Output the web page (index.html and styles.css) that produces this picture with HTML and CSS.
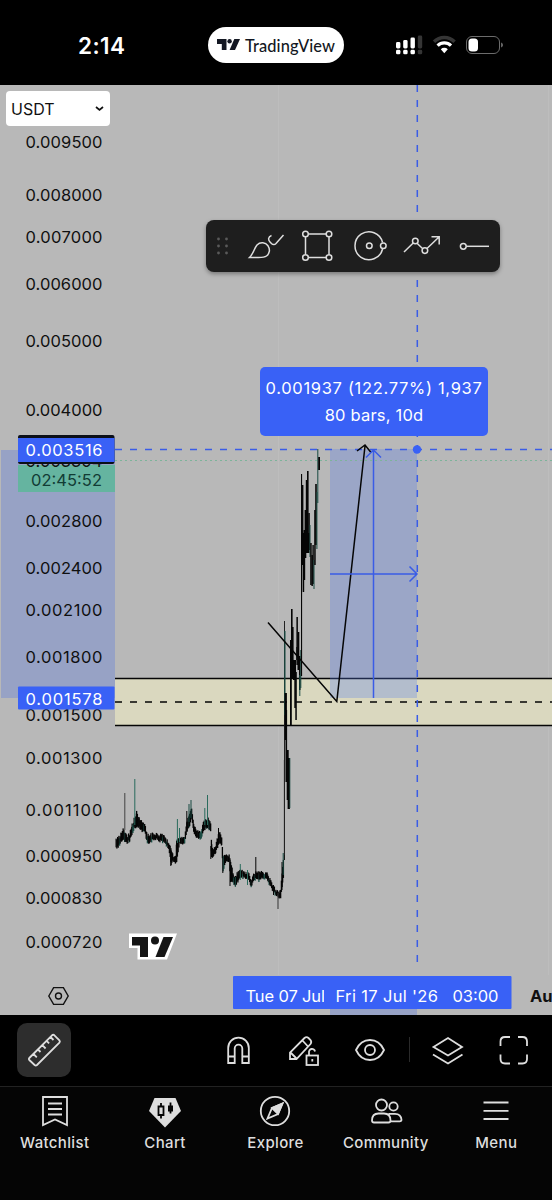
FILE: index.html
```html
<!DOCTYPE html>
<html lang="en">

<head>
    <meta charset="UTF-8" />
    <meta name="viewport" content="width=device-width, initial-scale=1.0" />
    <title>TradingView</title>
    <link rel="stylesheet" href="styles.css">
</head>

<body>
    <header class="status-bar">
        <span class="time">2:14</span>
        <div class="pill">
            <svg width="23" height="12" viewBox="0 0 23 12">
                <path d="M0 0h9.5v11H4.8V5H0z" />
                <circle cx="12.6" cy="2.3" r="2.2" />
                <path d="M17.3 0H23l-5 11h-5.4z" />
            </svg>
            <span>TradingView</span>
        </div>
        <svg class="status-icons" width="110" height="24" viewBox="394 33 110 24">
            <g fill="#fff">
                <rect x="396" y="42" width="4.4" height="6.5" rx="1.4" />
                <rect x="403.2" y="40" width="4.4" height="8.5" rx="1.4" />
                <rect x="410.5" y="37.5" width="4.4" height="11" rx="1.4" />
                <rect x="396" y="49.8" width="4.4" height="4.5" rx="1.4" />
                <rect x="403.2" y="49.8" width="4.4" height="4.5" rx="1.4" />
                <rect x="410.5" y="49.8" width="4.4" height="4.5" rx="1.4" />
            </g>
            <g fill="#353535">
                <rect x="417.8" y="35.5" width="4.4" height="13" rx="1.4" />
                <rect x="417.8" y="49.8" width="4.4" height="4.5" rx="1.4" />
            </g>
            <path d="M434 41.8a14.5 14.5 0 0 1 20.6 0" fill="none" stroke="#353535" stroke-width="3.4" />
            <path d="M437.6 45.6a9.5 9.5 0 0 1 13.4 0" fill="none" stroke="#fff" stroke-width="3.2" />
            <path d="M440.8 49.3a5 5 0 0 1 7 0l-3.5 3.9z" fill="#fff" />
            <rect x="466.5" y="36.5" width="33" height="17" rx="5.5" fill="none" stroke="#6c6c6c" />
            <rect x="468.5" y="38.5" width="9.5" height="13" rx="3.5" fill="#fff" />
            <path d="M501.2 42.5c2.2.8 2.2 4.2 0 5z" fill="#7a7a7a" />
        </svg>
    </header>

    <main class="chart">
        <svg class="plot" width="552" height="930" viewBox="0 85 552 930">
            <path class="grid" d="M278.5 85V975M548.5 85V975" />

            <!-- price zone -->
            <rect x="115" y="678.5" width="437" height="47" fill="#dad8bf" />
            <path class="ink" d="M115 678.5H552M115 725.5H552" />
            <path class="ink" d="M115 702H552" stroke-dasharray="7 8" />

            <!-- price axis -->
            <rect x="1" y="450" width="114" height="248" fill="#97a2c5" />
            <rect x="18" y="465" width="97" height="27" fill="#65b4a0" />
            <g class="axis" id="axis"></g>
            <text class="axis" x="25.5" y="467" textLength="77">0.003304</text>
            <text class="axis countdown" x="31" y="486" textLength="71">02:45:52</text>
            <rect x="18" y="435" width="96.5" height="29" rx="2" fill="#0b0f18" />
            <rect x="18" y="438" width="96.5" height="24" fill="#3961f6" />
            <text class="axis light" x="25.5" y="456" textLength="77">0.003516</text>

            <g id="candles"></g>

            <!-- measured range -->
            <rect x="330" y="449" width="87" height="249" fill="#5b7eea" fill-opacity=".3" />
            <path d="M115 460.5H552" stroke="#7db39a" stroke-dasharray="2 3" />
            <path class="blue" d="M115 449.5H552" stroke-dasharray="7 8" />
            <path class="blue" d="M417.3 85V970" stroke-dasharray="7 8" />
            <path class="ink" d="M268 622.5L336.8 701.5L365 446M357 451L365 445L371 452.5" />
            <path class="blue" d="M373.5 698V450M366 457.5L373.5 450L381 457.5M330 574H417M409.5 566.5L417 574L409.5 581.5" />
            <circle cx="417" cy="449.5" r="4.2" fill="#3961f6" />
            <rect x="18" y="686.5" width="96.5" height="23" rx="1" fill="#3961f6" />
            <text class="axis light" x="25.5" y="704.5" textLength="77">0.001578</text>

            <!-- watermark -->
            <path d="M129 933.5h48l-10 26h-29.5v-11.5h-8.5z" fill="#fff" />
            <g fill="#151515">
                <path d="M132 937h16v20h-8v-11.5h-8z" />
                <circle cx="155" cy="940.5" r="4" />
                <path d="M163.5 937H173l-8.5 20H155.500z" />
            </g>

            <!-- time axis -->
            <rect x="330" y="1005" width="87" height="10" fill="#97a2c5" />
            <rect x="233" y="976" width="278.5" height="33" rx="1" fill="#3961f6" />
            <clipPath id="dateClip"><rect x="240" y="976" width="84" height="33" /></clipPath>
            <g clip-path="url(#dateClip)"><text class="axis light" x="245.5" y="1001.5" textLength="79.5">Tue 07 Jul</text></g>
            <text class="axis light" x="335.5" y="1001.5" textLength="102.5">Fri 17 Jul '26</text>
            <text class="axis light" x="452.5" y="1001.5" textLength="46">03:00</text>
            <text class="axis month" x="530" y="1002">Au</text>
            <path d="M48.8 996l4.8-8.4h9.8l4.8 8.4l-4.8 8.4h-9.8z" fill="none" stroke="#111" stroke-width="1.4" />
            <circle cx="58.5" cy="996" r="3" fill="none" stroke="#111" stroke-width="1.4" />
        </svg>

        <div class="currency">
            <span>USDT</span>
            <svg width="9" height="6" viewBox="0 0 9 6"><path d="M1 1l3.5 3L8 1" fill="none" stroke="#111" stroke-width="1.7" /></svg>
        </div>

        <div class="draw-tools">
            <svg width="294" height="52" viewBox="206 220 294 52">
                <g fill="#5a5a5a">
                    <circle cx="218.5" cy="239" r="1.4" /><circle cx="226.5" cy="239" r="1.4" />
                    <circle cx="218.5" cy="246" r="1.4" /><circle cx="226.5" cy="246" r="1.4" />
                    <circle cx="218.5" cy="253" r="1.4" /><circle cx="226.5" cy="253" r="1.4" />
                </g>
                <path d="M249.5 257.5c4.5-4.5 4.5-9 7.5-12.5c3.5-3.500 8.500-2.500 11 .8c2.500 3.700 1.500 8-1.500 10.200c-2 1.500-4.500 1.500-8 1.500zM271.500 235.500c-3.500 1.200-3.500 4.500-1.500 6.500l1.700 1.700c1.300 1.300 3 1.200 4.300-.2l7.500-8.500" />
                <path d="M308.5 234h17.5M329 237v17.5M326 257.5h-17.5M305.5 254.5V237" />
                <circle cx="305.5" cy="234" r="2.8" /><circle cx="329" cy="234" r="2.8" />
                <circle cx="305.5" cy="257.5" r="2.8" /><circle cx="329" cy="257.5" r="2.8" />
                <path d="M382.6 242.500a14 14 0 1 0 0 6.500" />
                <circle cx="369.3" cy="245.7" r="2.8" /><circle cx="383.3" cy="245.7" r="2.8" />
                <path d="M404 252l9.2-9M417 243.2l5.8 5.5M427 248.5l12-11.5M431.5 236.8h7.7v7.7" />
                <circle cx="415.3" cy="241" r="2.8" /><circle cx="424.9" cy="250.6" r="2.8" />
                <circle cx="463.3" cy="246.3" r="2.9" /><path d="M466.2 246.3H489" />
            </svg>
        </div>

        <div class="range-label">
            <span class="range-price">0.001937 (122.77%) 1,937</span>
            <span>80 bars, 10d</span>
        </div>
    </main>

    <section class="toolbar">
        <button class="tool active" aria-label="Measure">
            <svg width="36" height="36" viewBox="0 0 36 36">
                <path d="M3.3 26L26 3.3q1.2-1 2.4 0l5 5q1 1.2 0 2.4L11 33q-1.2 1-2.4 0l-5.3-5q-1-1 0-2zM7.5 22l3.3 3.3M12 17.5l2.500 2.500M16.300 13.200l3.300 3.300M20.600 8.900l2.500 2.500M24.500 5l3 3" />
            </svg>
        </button>
        <div class="tool-group">
            <svg width="36" height="36" viewBox="0 0 36 36">
                <path d="M8.2 31V16a10.3 10.3 0 0 1 20.6 0v15h-6.5V16.5a3.8 3.8 0 0 0-7.600 0V31zM8.200 24.500h6.500M22.300 24.500h6.500" />
            </svg>
            <svg width="36" height="36" viewBox="0 0 36 36">
                <path d="M4 27v-6.500L18.500 6q2-1.800 4 0l2 2q1.500 2 0 4L10.500 27zM4.500 20.500l6 6M16.500 8.500l5.500 6" />
                <rect x="20.5" y="23.5" width="11.5" height="9.5" />
                <path d="M23 23.500V20.500a3 3 0 0 1 6-1M26.300 27v2.500" />
            </svg>
            <svg width="36" height="36" viewBox="0 0 36 36">
                <path d="M4 18C7 11.5 12 8 18 8s11 3.5 14 10c-3 6.5-8 10-14 10S7 24.5 4 18z" />
                <circle cx="18" cy="18" r="5" />
            </svg>
            <span class="divider"></span>
            <svg width="36" height="36" viewBox="0 0 36 36">
                <path d="M3.5 15L18 6l14 9l-14 8.5zM3 22.500L18 31.500l14.500-9" />
            </svg>
            <svg width="36" height="36" viewBox="0 0 36 36">
                <path d="M4.5 14V9.5q0-4.5 4.5-4.5h5M22 5h4.5q4.5 0 4.5 4.500V14M31 22.500v4.500q0 4.500-4.500 4.500H22M14 31.500H9q-4.500 0-4.500-4.500v-4.500" />
            </svg>
        </div>
    </section>

    <nav class="tabs">
        <a class="tab">
            <svg width="36" height="36" viewBox="0 0 36 36"><path d="M6 4h24v28l-12-5.5L6 32zM11 10.5h14M11 16h14M11 21.5h14" /></svg>
            <span>Watchlist</span>
        </a>
        <a class="tab">
            <svg width="36" height="36" viewBox="0 0 36 36">
                <path d="M7.5 5h21L34 18L18 34.5L2 18z" fill="#dedede" stroke="none" />
                <path d="M11.5 13.5h5v8.500h-5zM14 10v3.500M14 22.500v3M23.500 9.500v11" stroke="#050505" stroke-width="1.8" />
                <path d="M21 12.500h5v6h-5z" fill="#050505" stroke="none" />
            </svg>
            <span>Chart</span>
        </a>
        <a class="tab">
            <svg width="36" height="36" viewBox="0 0 36 36">
                <circle cx="18" cy="18" r="14.2" />
                <path d="M25.5 10.5L21 21l-6-6z" fill="#dedede" />
                <path d="M25.5 10.5L15 15l-4.5 10.5L21 21z" />
            </svg>
            <span>Explore</span>
        </a>
        <a class="tab">
            <svg width="36" height="36" viewBox="0 0 36 36">
                <circle cx="13.5" cy="12" r="5.5" /><circle cx="25.5" cy="13.5" r="4.2" />
                <path d="M4 27.5q0-7 6.5-7h5.500q6.500 0 6.500 7q0 2-2 2H6q-2 0-2-2zM20.500 20.800h6.500q6 0 6.500 6q0 1.500-1.800 1.500h-9" />
            </svg>
            <span>Community</span>
        </a>
        <a class="tab">
            <svg width="36" height="36" viewBox="0 0 36 36"><path d="M5.500 9.500h25M5.500 17.800h25M5.500 26h25" /></svg>
            <span>Menu</span>
        </a>
    </nav>

    <script src="script.js"></script>
</body>

</html>
```

FILE: styles.css
```css
body {
    margin: 0;
    background-color: #000;
    font-family: Inter, "Liberation Sans", sans-serif;
    width: 552px;
    height: 1200px;
    overflow: hidden;
    display: flex;
    flex-direction: column;
}

.status-bar {
    height: 85px;
    box-sizing: border-box;
    padding: 5px 48px 0 78px;
    display: flex;
    align-items: center;
    color: #fff;
}

.time {
    width: 130px;
    font-size: 22.5px;
    font-weight: 600;
    letter-spacing: 0.4px;
}

.pill {
    width: 136px;
    height: 36px;
    border-radius: 18px;
    background-color: #fff;
    color: #131722;
    display: flex;
    align-items: center;
    justify-content: center;
    gap: 5px;
    font-family: Lato, sans-serif;
    font-size: 16.4px;
    font-weight: 500;
    letter-spacing: 0.1px;
}

.pill svg {
    fill: #131722;
}

.status-icons {
    margin-left: auto;
}

/* Chart */
.chart {
    position: relative;
    height: 930px;
    background-color: #b8b8b8;
}

.plot {
    display: block;
}

.grid {
    stroke: #bdbdbd;
}

.ink,
.blue {
    fill: none;
    stroke: #050505;
    stroke-width: 1.5;
}

.blue {
    stroke: #3a5ce6;
}

.axis {
    font-size: 16.5px;
    fill: #101010;
}

.axis.countdown {
    fill: #123c35;
}

.axis.light {
    fill: #fff;
}

.axis.month {
    font-weight: 700;
}

.currency {
    position: absolute;
    left: 6px;
    top: 6px;
    width: 104px;
    height: 35px;
    box-sizing: border-box;
    padding: 0 6px 0 5px;
    border-radius: 4px;
    background-color: #fff;
    display: flex;
    align-items: center;
    justify-content: space-between;
    font-size: 16px;
    color: #111;
}

.draw-tools {
    position: absolute;
    left: 206px;
    top: 135px;
    width: 294px;
    height: 52px;
    border-radius: 8px;
    background-color: #1e1e1e;
    box-shadow: 0 2px 4px rgba(0, 0, 0, 0.35);
}

.draw-tools svg {
    fill: none;
    stroke: #dedede;
    stroke-width: 1.5;
}

.draw-tools g {
    stroke: none;
}

.range-label {
    position: absolute;
    left: 260px;
    top: 282px;
    width: 228px;
    height: 69px;
    border-radius: 5px;
    background-color: #3961f6;
    color: #fff;
    display: flex;
    flex-direction: column;
    align-items: center;
    justify-content: center;
    font-size: 16.5px;
    line-height: 27px;
    letter-spacing: 0.2px;
    white-space: nowrap;
}

.range-price {
    letter-spacing: 0.68px;
}

/* Bottom toolbar */
.toolbar {
    height: 71px;
    box-sizing: border-box;
    padding: 0 20px 2px 17px;
    display: flex;
    align-items: center;
    justify-content: space-between;
}

.toolbar svg,
.tab svg {
    fill: none;
    stroke: #dedede;
    stroke-width: 1.8;
}

.tool {
    width: 54px;
    height: 54px;
    padding: 0;
    border: none;
    border-radius: 10px;
    display: flex;
    align-items: center;
    justify-content: center;
}

.tool.active {
    background-color: #2d2d2d;
}

.tool-group {
    display: flex;
    align-items: center;
    gap: 30px;
}

.divider {
    width: 1px;
    height: 25px;
    margin: 0 -9.5px;
    background-color: #2a2a2a;
}

.tabs {
    flex: 1;
    border-top: 1px solid #222;
    background-color: #050505;
    display: grid;
    grid-template-columns: repeat(5, 1fr);
}

.tab {
    padding-top: 6px;
    display: flex;
    flex-direction: column;
    align-items: center;
    gap: 4px;
    margin-left: -1px;
    color: #dedede;
    font-size: 15px;
    font-weight: 500;
    letter-spacing: 0.35px;
}
```

FILE: script.js
```js
const NS = 'http://www.w3.org/2000/svg';
const axis = document.getElementById('axis');
const candles = document.getElementById('candles');

const prices = [
    ['0.009500', 142], ['0.008000', 195], ['0.007000', 237], ['0.006000', 284],
    ['0.005000', 341], ['0.004000', 410], ['0.002800', 521], ['0.002400', 568],
    ['0.002100', 610], ['0.001800', 657.5], ['0.001500', 715], ['0.001300', 758.5],
    ['0.001100', 810.5], ['0.000950', 856], ['0.000830', 898], ['0.000720', 942]
];

prices.forEach(([label, y]) => {
    const text = document.createElementNS(NS, 'text');
    text.setAttribute('x', 25.5);
    text.setAttribute('y', y + 5.8);
    text.setAttribute('textLength', 77);
    text.textContent = label;
    axis.appendChild(text);
});

function bar(x, high, low, color = '#050505', width = 1) {
    const rect = document.createElementNS(NS, 'rect');
    rect.setAttribute('x', x);
    rect.setAttribute('y', high);
    rect.setAttribute('width', width);
    rect.setAttribute('height', low - high);
    rect.setAttribute('fill', color);
    candles.appendChild(rect);
}

// x, high, low of the quiet stretch
const base = [
    [115.5, 840, 847], [117.5, 839, 847], [119.5, 836, 842], [122.5, 829, 838], [124.5, 832, 840],
    [126.5, 837, 842], [129, 835, 840], [131.5, 826, 833], [133.5, 820, 827], [136, 813, 826],
    [138.5, 819, 826], [140, 821, 829], [142, 824, 831], [144, 823, 829], [146, 834, 840],
    [148, 837, 843], [151, 835, 840], [155, 835, 838], [158.5, 836, 840], [162, 836, 841],
    [165, 839, 843], [168, 844, 848], [170.5, 850, 863], [172.5, 857, 860], [175, 857, 862],
    [176, 840, 860], [179, 838, 842], [182, 838, 843], [184, 836, 841], [186.5, 823, 831],
    [189, 813, 824], [191, 808, 816], [193, 826, 832], [195, 829, 835], [198, 834, 839],
    [200.5, 830, 836], [203.5, 821, 829], [206, 820, 826], [208.5, 820, 828], [210, 825, 831],
    [211, 846, 857], [213, 849, 854], [215, 848, 853], [217, 838, 846], [218.5, 832, 842],
    [221, 838, 844], [222.5, 855, 869], [225, 856, 861], [228.5, 856, 860], [230, 861, 880],
    [232.5, 876, 882], [235, 877, 884], [237.5, 873, 880], [240, 870, 876], [243.5, 874, 877],
    [247.5, 874, 878], [250.5, 880, 885], [253, 876, 880], [256, 872, 877], [258.5, 874, 880],
    [262, 873, 877], [265, 873, 877], [267, 874, 879], [269.5, 881, 885], [273, 888, 892],
    [276, 892, 895], [278.5, 893, 897], [280, 890, 897], [282, 868, 882], [283.5, 853, 872]
];

for (let i = 0; i < base.length - 1; i++) {
    const [x0, h0, l0] = base[i];
    const [x1, h1, l1] = base[i + 1];
    for (let x = x0; x < x1; x += 0.75) {
        const t = (x - x0) / (x1 - x0);
        const n = Math.abs(Math.sin(x * 12.9898) * 43758.5) % 1;
        const high = h0 + (h1 - h0) * t + n * 4 - 2.5;
        const low = l0 + (l1 - l0) * t + n * 3 - 0.5;
        bar(x, high, Math.max(low, high + 3), n > 0.88 ? '#194b42' : '#050505', 1.3);
    }
}

// single long wicks
[
    [124.3, 793, 830, '#444'], [134.3, 779, 825, '#2a6b5d'], [176.9, 819, 843, '#2a6b5d'],
    [179, 828, 842, '#2a6b5d'], [186.3, 811, 830], [188.5, 804, 822, '#194b42'], [190.5, 800, 818, '#194b42'],
    [204.3, 808, 825, '#2a6b5d'], [207, 795, 825, '#2a6b5d'], [210.3, 846, 859], [218, 828, 843],
    [170.3, 850, 866], [222.3, 855, 873], [229.5, 860, 886], [234.8, 877, 887, '#194b42'],
    [239.8, 864, 880, '#2a6b5d'], [247, 870, 885, '#2a6b5d'], [250.5, 880, 886], [255.3, 857, 878],
    [273, 885, 895], [277.5, 893, 909, '#333']
].forEach(w => bar(...w));

// breakout
const dark = '#194b42';
[
    [281.5, 862, 890], [282.7, 853, 875, dark], [283.9, 760, 860],
    [284, 621, 855, '#222'], [284.2, 631, 715, dark, 1.3], [284.6, 693, 740, '#050505', 2.3],
    [285.5, 710, 782, '#050505', 1.6], [286.7, 750, 800, '#050505', 2], [287.6, 758, 809, '#050505', 2.3],
    [289.6, 758, 808, dark, 0.7], [290, 640, 725, '#050505', 1.8], [291, 609, 678, '#050505', 1.6],
    [292, 627, 678, '#050505', 1.6], [293, 660, 680, '#050505', 3], [294.3, 667, 708, '#050505', 1.6],
    [295.3, 672, 720, '#050505', 1.5], [296.3, 647, 660], [296.4, 617, 665, '#050505', 1.5],
    [297.5, 632, 670, '#050505', 1.8], [299, 656, 690, '#050505', 1.5], [299.3, 675, 696, dark],
    [300.3, 650, 688, dark], [301, 474, 676, '#050505', 1.1],
    [301.7, 485, 565, '#050505', 1.7], [302.7, 533, 592, '#050505', 1.5], [303.5, 530, 580, '#050505', 1.7],
    [302.5, 533, 553, '#050505', 7],
    [304.6, 510, 558, '#050505', 1.7], [305.8, 480, 552, '#050505', 1.5], [307, 471, 552, '#050505', 1.6],
    [308.3, 513, 550, '#050505', 1.5], [309.5, 525, 557, dark], [310.2, 543, 585, '#050505', 1.5],
    [311.4, 555, 586, '#050505', 1.5], [312.4, 545, 584, '#050505', 1.4], [313.5, 560, 589, dark],
    [314.2, 510, 565, '#050505', 1.5], [315.2, 484, 545, '#050505', 1.6], [316.4, 492, 549, dark],
    [317.3, 449, 503, dark], [318.2, 457, 470, '#050505', 1.8]
].forEach(w => bar(...w));
```
